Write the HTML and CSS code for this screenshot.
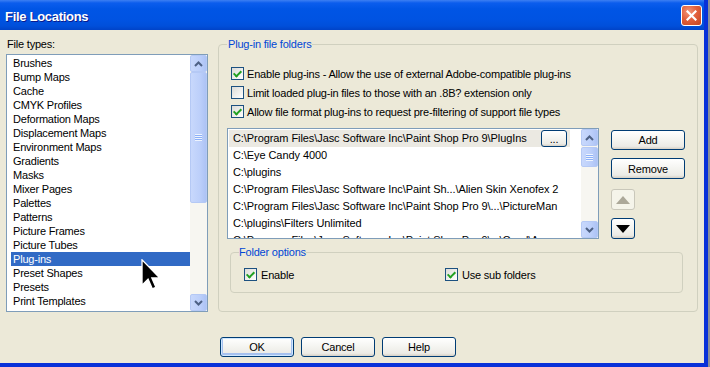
FILE: index.html
```html
<!DOCTYPE html>
<html lang="en">
<head>
    <meta charset="UTF-8">
    <title>File Locations</title>
    <link rel="stylesheet" href="styles.css">
</head>
<body>

<div class="window">
    <div class="titlebar">
        <span class="title">File Locations</span>
        <button class="close" aria-label="Close">
            <svg width="11" height="11" viewBox="0 0 11 11"><path d="M1.5 1.5 L9.5 9.5 M9.5 1.5 L1.5 9.5" stroke="#fff" stroke-width="2.2" stroke-linecap="square"/></svg>
        </button>
    </div>

    <div class="body">
        <div class="main">
            <div class="types">
                <label class="types-label">File types:</label>
                <div class="listbox">
                    <ul class="items">
                        <li>Brushes</li>
                        <li>Bump Maps</li>
                        <li>Cache</li>
                        <li>CMYK Profiles</li>
                        <li>Deformation Maps</li>
                        <li>Displacement Maps</li>
                        <li>Environment Maps</li>
                        <li>Gradients</li>
                        <li>Masks</li>
                        <li>Mixer Pages</li>
                        <li>Palettes</li>
                        <li>Patterns</li>
                        <li>Picture Frames</li>
                        <li>Picture Tubes</li>
                        <li class="selected">Plug-ins</li>
                        <li>Preset Shapes</li>
                        <li>Presets</li>
                        <li>Print Templates</li>
                    </ul>
                    <div class="scrollbar">
                        <span class="sb-btn"><svg width="9" height="6" viewBox="0 0 9 6"><path d="M1 5 L4.5 1.5 L8 5" fill="none" stroke="#4d6185" stroke-width="2"/></svg></span>
                        <span class="sb-thumb tall"><i class="grip"></i></span>
                        <span class="sb-track"></span>
                        <span class="sb-btn"><svg width="9" height="6" viewBox="0 0 9 6"><path d="M1 1 L4.5 4.5 L8 1" fill="none" stroke="#4d6185" stroke-width="2"/></svg></span>
                    </div>
                </div>
            </div>

            <fieldset class="group plugins">
                <legend>Plug-in file folders</legend>
                <label class="check"><span class="box on"></span>Enable plug-ins - Allow the use of external Adobe-compatible plug-ins</label>
                <label class="check"><span class="box"></span>Limit loaded plug-in files to those with an .8B? extension only</label>
                <label class="check"><span class="box on"></span>Allow file format plug-ins to request pre-filtering of support file types</label>

                <div class="folders">
                    <div class="pathlist">
                        <ul class="paths">
                            <li class="editing">C:\Program Files\Jasc Software Inc\Paint Shop Pro 9\PlugIns<button class="btn dots">...</button></li>
                            <li>C:\Eye Candy 4000</li>
                            <li>C:\plugins</li>
                            <li>C:\Program Files\Jasc Software Inc\Paint Sh...\Alien Skin Xenofex 2</li>
                            <li>C:\Program Files\Jasc Software Inc\Paint Shop Pro 9\...\PictureMan</li>
                            <li>C:\plugins\Filters Unlimited</li>
                            <li class="peek">C:\Program Files\Jasc Software Inc\Paint Shop Pro 9\...\Corel\Ampersand</li>
                        </ul>
                        <div class="scrollbar">
                            <span class="sb-btn"><svg width="9" height="6" viewBox="0 0 9 6"><path d="M1 5 L4.5 1.5 L8 5" fill="none" stroke="#4d6185" stroke-width="2"/></svg></span>
                            <span class="sb-gap"></span>
                            <span class="sb-thumb short"><i class="grip"></i></span>
                            <span class="sb-track"></span>
                            <span class="sb-btn"><svg width="9" height="6" viewBox="0 0 9 6"><path d="M1 1 L4.5 4.5 L8 1" fill="none" stroke="#4d6185" stroke-width="2"/></svg></span>
                        </div>
                    </div>
                    <div class="side">
                        <button class="btn wide">Add</button>
                        <button class="btn wide remove">Remove</button>
                        <button class="arrow up" disabled><svg width="14" height="8" viewBox="0 0 14 8"><path d="M0 8 L7 0 L14 8 Z" fill="#aca899"/></svg></button>
                        <button class="btn arrow down"><svg width="14" height="8" viewBox="0 0 14 8"><path d="M0 0 L14 0 L7 8 Z" fill="#000"/></svg></button>
                    </div>
                </div>

                <fieldset class="group options">
                    <legend>Folder options</legend>
                    <div class="opts">
                        <label class="check"><span class="box on"></span>Enable</label>
                        <label class="check"><span class="box on"></span>Use sub folders</label>
                    </div>
                </fieldset>
            </fieldset>
        </div>

        <div class="actions">
            <button class="btn wide default">OK</button>
            <button class="btn wide">Cancel</button>
            <button class="btn wide">Help</button>
        </div>
    </div>

    <svg class="cursor" width="20" height="31" viewBox="0 0 12 19">
        <path d="M0.5 0.5 L0.5 16 L4.2 12.4 L6.8 18.3 L9 17.3 L6.5 11.6 L11.4 11.6 Z" fill="#000" stroke="#fff" stroke-width="0.8"/>
    </svg>
</div>

</body>
</html>
```

FILE: styles.css
```css
body {
    margin: 0;
    background: #8a8f99;
    font-family: "Liberation Sans", Arial, sans-serif;
    font-size: 11px;
    letter-spacing: -0.2px;
    color: #000;
}

.window {
    position: relative;
    width: 708px;
    height: 367px;
    box-sizing: border-box;
    background: #ECE9D8;
    border-right: 4px solid #0831d9;
    border-bottom: 4px solid #0831d9;
    display: flex;
    flex-direction: column;
}

.titlebar {
    height: 30px;
    flex: none;
    display: flex;
    align-items: center;
    padding: 0 2px 0 5px;
    background: linear-gradient(#3d7ff2 0, #0b5ded 3px, #0055e5 9px, #0053e2 20px, #004fda 26px, #0043c8 30px);
}

.title {
    flex: 1;
    color: #fff;
    font-weight: bold;
    font-size: 13px;
    letter-spacing: -0.3px;
    padding-top: 2px;
    text-shadow: 1px 1px #0a1a8c;
}

.close {
    width: 21px;
    height: 21px;
    padding: 0;
    display: flex;
    align-items: center;
    justify-content: center;
    border: 1px solid #fff;
    border-radius: 3px;
    background: radial-gradient(circle at 35% 30%, #f2967a 0, #e2603c 45%, #c4441f 100%);
}

.body {
    flex: 1;
    padding: 7px 0 0 6px;
}

.main {
    display: flex;
    gap: 10px;
}

.types-label {
    display: block;
    line-height: 14px;
    margin-bottom: 3px;
    padding-left: 1px;
}

.listbox {
    width: 202px;
    height: 258px;
    box-sizing: border-box;
    border: 1px solid #7f9db9;
    background: #fff;
    display: flex;
}

.items {
    flex: 1;
    list-style: none;
    margin: 0;
    padding: 1px 0 0 4px;
}

.items li {
    line-height: 14px;
    height: 14px;
    padding-left: 2px;
    white-space: nowrap;
}

.items li.selected {
    background: #316ac5;
    color: #fff;
}

.scrollbar {
    width: 17px;
    flex: none;
    display: flex;
    flex-direction: column;
    background: #f7f6f1;
}

.sb-btn, .sb-thumb {
    box-sizing: border-box;
    border: 1px solid #b5c9f5;
    border-radius: 2px;
    background: linear-gradient(90deg, #c8d8fc, #bccffa 60%, #adc3f5);
    display: flex;
    align-items: center;
    justify-content: center;
}

.sb-btn {
    height: 17px;
    flex: none;
}

.sb-thumb.tall {
    height: 131px;
}

.sb-thumb.short {
    height: 20px;
}

.sb-gap {
    height: 1px;
    flex: none;
}

.sb-track {
    flex: 1;
}

.grip {
    width: 7px;
    height: 7px;
    background: repeating-linear-gradient(#eef4fe 0 1px, #8cb0f8 1px 2px);
}

.group {
    margin: 0;
    border: 1px solid #d0d0bf;
    border-radius: 4px;
    min-width: 0;
}

.group legend {
    padding: 0 1px;
    line-height: 14px;
    color: #0046d5;
}

.plugins {
    width: 480px;
    box-sizing: border-box;
    padding: 13px 13px 17px 8px;
}

.check {
    display: flex;
    align-items: center;
    gap: 3px;
    height: 19px;
    white-space: nowrap;
}

.plugins > .check {
    margin-left: 4px;
}

.box {
    width: 13px;
    height: 13px;
    flex: none;
    box-sizing: border-box;
    border: 1px solid #1c5180;
    background: linear-gradient(135deg, #dcdcd7, #fff);
    display: flex;
    align-items: center;
    justify-content: center;
}

.box.on::after {
    content: "";
    width: 3px;
    height: 6px;
    margin-top: -2px;
    border: solid #21a121;
    border-width: 0 2px 2px 0;
    transform: rotate(45deg);
}

.folders {
    display: flex;
    gap: 12px;
    margin-top: 7px;
}

.pathlist {
    width: 372px;
    height: 111px;
    box-sizing: border-box;
    border: 1px solid #7f9db9;
    background: #fff;
    display: flex;
}

.paths {
    flex: 1;
    list-style: none;
    margin: 0;
    padding: 1px 0 0 1px;
    overflow: hidden;
    letter-spacing: -0.08px;
}

.paths li {
    height: 17px;
    line-height: 17px;
    padding-left: 4px;
    white-space: nowrap;
    display: flex;
    align-items: center;
}

.paths li.peek {
    height: 7px;
    align-items: flex-start;
    overflow: hidden;
}

.paths li.editing {
    width: 337px;
    background: #ebe9e2;
}

.btn {
    font-family: inherit;
    font-size: 11px;
    letter-spacing: -0.2px;
    color: #000;
    padding: 0;
    box-sizing: border-box;
    border: 1px solid #003c74;
    border-radius: 3px;
    background: linear-gradient(#ffffff, #f4f4f0 50%, #ecebe6 85%, #d6d0c5);
}

.dots {
    width: 26px;
    height: 17px;
    flex: none;
    margin-left: auto;
    margin-right: 3px;
    line-height: 12px;
}

.side {
    display: flex;
    flex-direction: column;
    align-items: flex-start;
    padding-top: 2px;
}

.wide {
    width: 74px;
    height: 20px;
}

.remove {
    height: 21px;
    margin-top: 8px;
}

.arrow {
    width: 24px;
    height: 21px;
    padding: 0;
    display: flex;
    align-items: center;
    justify-content: center;
}

.arrow.up {
    margin-top: 10px;
    border: 1px solid #c9c7ba;
    border-radius: 3px;
    background: #f5f4ea;
}

.arrow.down {
    margin-top: 8px;
}

.options {
    width: 453px;
    box-sizing: border-box;
    margin: 6px 0 0 3px;
    padding: 6px 8px 8px 8px;
}

.options legend {
    padding: 0;
}

.opts {
    display: grid;
    grid-template-columns: 201px auto;
    padding-left: 5px;
}

.opts .check {
    gap: 4px;
}

.actions {
    display: flex;
    gap: 7px;
    margin-top: 25px;
    padding-left: 214px;
}

.default {
    box-shadow: inset 0 0 0 1px #cee7ff, inset 0 -1px 0 2px #a6c1ef;
}

.cursor {
    position: absolute;
    left: 141px;
    top: 259px;
}
```
